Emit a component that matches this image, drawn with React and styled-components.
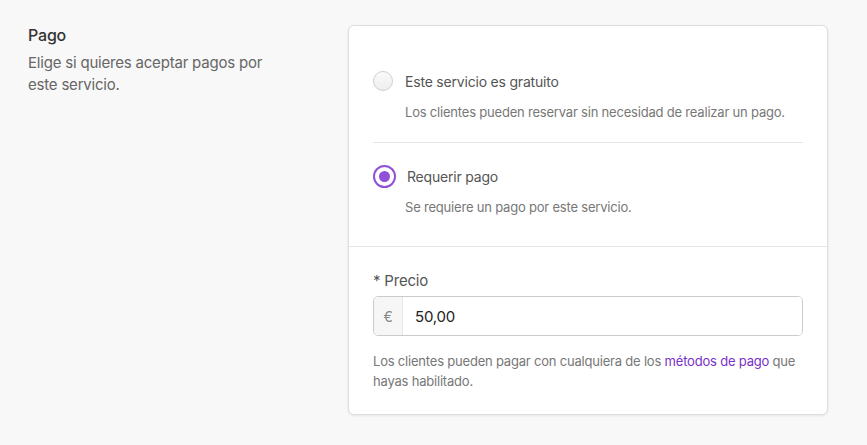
import React, { useState } from "react";
import styled, { createGlobalStyle } from "styled-components";

const GlobalStyle = createGlobalStyle`
  body {
    margin: 0;
    background: #f8f8f8;
    font-family: Inter, "Noto Sans", sans-serif;
    letter-spacing: -0.2px;
  }
`;

const Page = styled.div`
  display: flex;
  align-items: flex-start;
  padding: 24px 0 0 28px;
  min-height: 445px;
  box-sizing: border-box;
`;

const Intro = styled.div`
  width: 320px;
  display: flex;
  flex-direction: column;
  gap: 6px;
`;

const Title = styled.div`
  font-size: 16px;
  line-height: 22px;
  font-weight: 500;
  color: #333;
`;

const Lead = styled.div`
  font-size: 15px;
  line-height: 22px;
  color: #666;
  width: 250px;
`;

const Card = styled.div`
  margin-top: 1px;
  width: 480px;
  box-sizing: border-box;
  background: #fff;
  border: 1px solid #dedede;
  border-radius: 6px;
  box-shadow: 0 1px 3px rgba(0, 0, 0, 0.08);
`;

const Options = styled.div`
  padding: 22px 24px 9px;
  border-bottom: 1px solid #e6e6e6;
`;

const Option = styled.label`
  display: flex;
  flex-direction: column;
  gap: 10px;
  padding: 22px 0 20px;
  cursor: pointer;
  & + & {
    border-top: 1px solid #e6e6e6;
  }
`;

const OptionRow = styled.div`
  display: flex;
  align-items: center;
  gap: ${({ checked }) => (checked ? "11px" : "12px")};
  height: 22px;
`;

const Radio = styled.span`
  box-sizing: border-box;
  width: ${({ checked }) => (checked ? "23px" : "20px")};
  height: ${({ checked }) => (checked ? "23px" : "20px")};
  border-radius: 50%;
  border: ${({ checked }) => (checked ? "2px solid #9150d8" : "1px solid #cfcfcf")};
  background: ${({ checked }) =>
    checked ? "#fff" : "linear-gradient(#fafafa, #eeeeee)"};
  display: flex;
  align-items: center;
  justify-content: center;
  flex-shrink: 0;
  &::after {
    content: "";
    display: ${({ checked }) => (checked ? "block" : "none")};
    width: 11px;
    height: 11px;
    border-radius: 50%;
    background: #9150d8;
  }
`;

const OptionLabel = styled.span`
  font-size: 14px;
  color: #555;
`;

const OptionHint = styled.div`
  margin-left: 32px;
  font-size: 13px;
  line-height: 20px;
  color: #777;
`;

const PriceSection = styled.div`
  padding: 23px 24px 23px;
  display: flex;
  flex-direction: column;
`;

const FieldLabel = styled.div`
  font-size: 15px;
  line-height: 22px;
  color: #555;
  margin-bottom: 4px;
`;

const InputGroup = styled.div`
  display: flex;
  height: 40px;
  box-sizing: border-box;
  border: 1px solid #cccccc;
  border-radius: 5px;
  overflow: hidden;
`;

const Prefix = styled.span`
  width: 28px;
  display: flex;
  align-items: center;
  justify-content: center;
  background: #f6f6f6;
  border-right: 1px solid #e8e8e8;
  color: #888;
  font-size: 14px;
`;

const Input = styled.input`
  flex: 1;
  border: none;
  outline: none;
  padding: 0 12px;
  font-family: inherit;
  letter-spacing: inherit;
  font-size: 15px;
  color: #222;
`;

const Help = styled.p`
  margin: 15px 0 0;
  font-size: 13px;
  line-height: 20px;
  color: #777;
`;

const Link = styled.a`
  color: #7a2fc9;
  text-decoration: none;
`;

const options = [
  {
    id: "free",
    label: "Este servicio es gratuito",
    hint: "Los clientes pueden reservar sin necesidad de realizar un pago.",
  },
  {
    id: "paid",
    label: "Requerir pago",
    hint: "Se requiere un pago por este servicio.",
  },
];

const App = () => {
  const [mode, setMode] = useState("paid");
  const [price, setPrice] = useState("50,00");

  return (
    <>
      <GlobalStyle />
      <Page>
        <Intro>
          <Title>Pago</Title>
          <Lead>Elige si quieres aceptar pagos por este servicio.</Lead>
        </Intro>
        <Card>
          <Options>
            {options.map((opt) => (
              <Option key={opt.id} onClick={() => setMode(opt.id)}>
                <OptionRow checked={mode === opt.id}>
                  <Radio checked={mode === opt.id} />
                  <OptionLabel>{opt.label}</OptionLabel>
                </OptionRow>
                <OptionHint>{opt.hint}</OptionHint>
              </Option>
            ))}
          </Options>
          <PriceSection>
            <FieldLabel>* Precio</FieldLabel>
            <InputGroup>
              <Prefix>€</Prefix>
              <Input value={price} onChange={(e) => setPrice(e.target.value)} />
            </InputGroup>
            <Help>
              Los clientes pueden pagar con cualquiera de los{" "}
              <Link href="#">métodos de pago</Link> que hayas habilitado.
            </Help>
          </PriceSection>
        </Card>
      </Page>
    </>
  );
};

export default App;
